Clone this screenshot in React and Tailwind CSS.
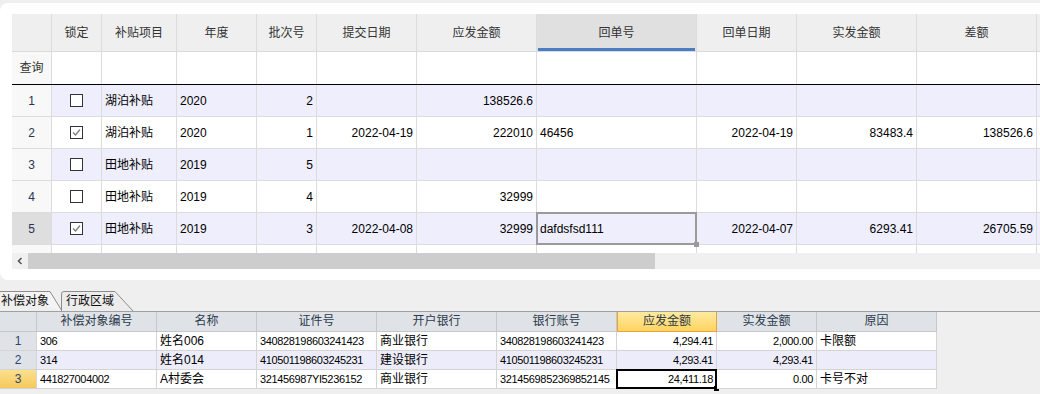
import React from 'react';

const topCols = [40, 50, 75, 80, 60, 100, 120, 160, 100, 120, 120, 60];
const topHeaders = ['', '锁定', '补贴项目', '年度', '批次号', '提交日期', '应发金额', '回单号', '回单日期', '实发金额', '差额', ''];
// align per column: c = center, l = left, r = right
const topAlign = ['c', 'c', 'l', 'l', 'r', 'r', 'r', 'l', 'r', 'r', 'r', 'l'];

const topRows = [
  { no: 1, lock: false, item: '湖泊补贴', year: '2020', batch: '2', submit: '', due: '138526.6', receipt: '', rdate: '', paid: '', diff: '' },
  { no: 2, lock: true, item: '湖泊补贴', year: '2020', batch: '1', submit: '2022-04-19', due: '222010', receipt: '46456', rdate: '2022-04-19', paid: '83483.4', diff: '138526.6' },
  { no: 3, lock: false, item: '田地补贴', year: '2019', batch: '5', submit: '', due: '', receipt: '', rdate: '', paid: '', diff: '' },
  { no: 4, lock: false, item: '田地补贴', year: '2019', batch: '4', submit: '', due: '32999', receipt: '', rdate: '', paid: '', diff: '' },
  { no: 5, lock: true, item: '田地补贴', year: '2019', batch: '3', submit: '2022-04-08', due: '32999', receipt: 'dafdsfsd111', rdate: '2022-04-07', paid: '6293.41', diff: '26705.59', selected: true },
];

const botCols = [37, 120, 100, 120, 120, 120, 100, 100, 120];
const botHeaders = ['', '补偿对象编号', '名称', '证件号', '开户银行', '银行账号', '应发金额', '实发金额', '原因'];
const botRows = [
  ['1', '306', '姓名006', '340828198603241423', '商业银行', '340828198603241423', '4,294.41', '2,000.00', '卡限额'],
  ['2', '314', '姓名014', '410501198603245231', '建设银行', '410501198603245231', '4,293.41', '4,293.41', ''],
  ['3', '441827004002', 'A村委会', '321456987YI5236152', '商业银行', '3214569852369852145', '24,411.18', '0.00', '卡号不对'],
];
const botAlign = ['c', 'l', 'l', 'l', 'l', 'l', 'r', 'r', 'l'];

const alignCls = { c: 'justify-center', l: 'justify-start pl-[3px]', r: 'justify-end pr-[3px]' };

function Checkbox({ checked }) {
  return (
    <div className="w-[13px] h-[13px] border border-[#333] bg-white flex items-center justify-center">
      {checked && (
        <svg width="11" height="11" viewBox="0 0 11 11">
          <polyline points="2,5.5 4.5,8 9,2.5" fill="none" stroke="#7a7a7a" strokeWidth="1.2" />
        </svg>
      )}
    </div>
  );
}

function TopRow({ r }) {
  const odd = r.no % 2 === 1;
  const vals = [r.item, r.year, r.batch, r.submit, r.due, r.receipt, r.rdate, r.paid, r.diff, ''];
  return (
    <div className={`flex h-[32px] border-b border-[#dcdcdc] ${odd ? 'bg-[#eeeefc]' : 'bg-white'}`}>
      <div
        className={`shrink-0 flex items-center justify-center border-r border-[#dcdcdc] text-[#2a3550] ${r.selected ? 'bg-[#dedede]' : 'bg-[#f8f8f8]'}`}
        style={{ width: topCols[0] }}
      >
        {r.no}
      </div>
      <div className="shrink-0 flex items-center justify-center border-r border-[#dcdcdc]" style={{ width: topCols[1] }}>
        <Checkbox checked={r.lock} />
      </div>
      {vals.map((v, i) => {
        const c = i + 2;
        const sel = r.selected && c === 7;
        return (
          <div
            key={c}
            className={`relative shrink-0 flex items-center border-r border-[#dcdcdc] ${alignCls[topAlign[c]]}`}
            style={{ width: topCols[c] }}
          >
            {v}
            {sel && (
              <>
                <div className="absolute -left-[1px] -top-[1px] -right-[1px] -bottom-[1px] border-2 border-[#9a9a9a]" />
                <div className="absolute -right-[3px] -bottom-[3px] w-[5px] h-[5px] bg-[#9a9a9a]" />
              </>
            )}
          </div>
        );
      })}
    </div>
  );
}

function Tabs() {
  return (
    <div className="relative h-[31px] pt-[11px]">
      <svg className="absolute left-0 top-[11px]" width="1040" height="21" viewBox="0 0 1040 21">
        <path d="M0,0.5 L50,0.5 L62,20" fill="#f4f4f4" stroke="#8c8c8c" strokeWidth="1" />
        <path d="M61.5,20 L61.5,3 Q61.5,0.5 64,0.5 L115,0.5 L133,20" fill="#ececec" stroke="#8c8c8c" strokeWidth="1" />
        <line x1="0" y1="20.5" x2="1040" y2="20.5" stroke="#a0a0a0" strokeWidth="1" />
      </svg>
      <div className="relative flex items-center h-[20px] text-[12px] text-[#111]">
        <span className="pl-[1px] w-[66px]">补偿对象</span>
        <span>行政区域</span>
      </div>
    </div>
  );
}

export default function App() {
  return (
    <div
      className="w-[1040px] h-[394px] overflow-hidden bg-[#efefef] pt-[3px] text-[12px] text-black"
      style={{ fontFamily: '"Liberation Sans", "Noto Sans CJK SC", sans-serif' }}
    >
      {/* upper grid card */}
      <div className="w-[1060px] h-[277px] bg-white rounded-lg pl-[12px] pt-[11px] overflow-hidden">
        <div className="w-[1048px] overflow-hidden">
          {/* header */}
          <div className="flex h-[38px] bg-[#efefef] border-b border-[#dadada] text-[#333]">
            {topHeaders.map((h, i) => (
              <div
                key={i}
                className={`relative shrink-0 flex items-center justify-center border-r border-[#dcdcdc] ${i === 7 ? 'bg-[#e0e0e0]' : ''}`}
                style={{ width: topCols[i] }}
              >
                {h}
                {i === 7 && <div className="absolute left-[1px] right-[1px] bottom-0 h-[3px] bg-[#4a7ec4]" />}
              </div>
            ))}
          </div>
          {/* filter row */}
          <div className="flex h-[33px] border-b border-black">
            {topCols.map((w, i) => (
              <div
                key={i}
                className={`shrink-0 flex items-center justify-center border-r border-[#dcdcdc] ${i === 0 ? 'bg-[#f8f8f8] text-[#333]' : ''}`}
                style={{ width: w }}
              >
                {i === 0 ? '查询' : ''}
              </div>
            ))}
          </div>
          {topRows.map((r) => (
            <TopRow key={r.no} r={r} />
          ))}
          {/* partial next row */}
          <div className="flex h-[8px]">
            {topCols.map((w, i) => (
              <div key={i} className={`shrink-0 border-r border-[#dcdcdc] ${i === 0 ? 'bg-[#f8f8f8]' : ''}`} style={{ width: w }} />
            ))}
          </div>
          {/* horizontal scrollbar */}
          <div className="flex h-[16px] bg-[#f0f0f0]">
            <div className="w-[16px] flex items-center justify-center">
              <svg width="8" height="8" viewBox="0 0 8 8">
                <polyline points="5.5,1 2.5,4 5.5,7" fill="none" stroke="#555" strokeWidth="1.6" />
              </svg>
            </div>
            <div className="w-[627px] bg-[#cdcdcd]" />
          </div>
        </div>
      </div>

      <Tabs />

      {/* lower grid */}
      <div className="text-[12px]">
        <div className="flex h-[21px]">
          {botHeaders.map((h, i) => (
            <div
              key={i}
              className={`shrink-0 flex items-center justify-center border-r border-b text-[#2b3a4a] ${
                i === 6
                  ? 'bg-gradient-to-b from-[#ffeba3] to-[#ffd45e] border-[#e5a53a] border-l'
                  : 'bg-[#dfe3e8] border-[#c4c8cc]'
              }`}
              style={{ width: botCols[i] }}
            >
              {h}
            </div>
          ))}
        </div>
        {botRows.map((row, ri) => (
          <div key={ri} className="flex h-[19px]">
            {row.map((v, i) => {
              const isHead = i === 0;
              const selRow = ri === 2;
              const sel = selRow && i === 6;
              let bg = ri === 1 ? 'bg-[#ececfb]' : 'bg-white';
              if (isHead) bg = selRow ? 'bg-gradient-to-b from-[#fbe08e] to-[#f5c95a]' : 'bg-[#dfe3e8]';
              const digits = /^[0-9A-Z,.]+$/.test(v);
              return (
                <div
                  key={i}
                  className={`relative shrink-0 flex items-center border-r border-b border-[#d4d4d4] whitespace-nowrap ${bg} ${alignCls[botAlign[i]]} ${
                    isHead ? 'text-[#2d4670]' : ''
                  } ${digits && !isHead ? 'text-[11px] tracking-[-0.35px]' : ''}`}
                  style={{ width: botCols[i] }}
                >
                  {v}
                  {sel && (
                    <>
                      <div className="absolute -left-[1px] -top-[1px] -right-[1px] -bottom-[1px] border-2 border-black" />
                      <div className="absolute -right-[3px] -bottom-[3px] w-[5px] h-[5px] bg-black" />
                    </>
                  )}
                </div>
              );
            })}
          </div>
        ))}
      </div>
    </div>
  );
}
